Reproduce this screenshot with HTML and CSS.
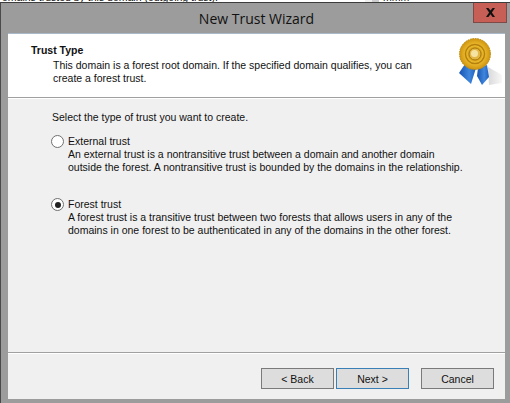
FILE: index.html
```html
<!DOCTYPE html>
<html lang="en">
<head>
    <meta charset="UTF-8">
    <title>New Trust Wizard</title>
    <link rel="stylesheet" href="styles.css">
</head>
<body>
    <div class="backdrop">
        <span class="backdrop-text">omains trusted by this domain (outgoing trust):</span>
        <span class="backdrop-scroll"></span>
        <span class="backdrop-col">mmm</span>
    </div>

    <div class="window">
        <div class="titlebar">
            <span class="title">New Trust Wizard</span>
            <button class="close">
                <svg width="11" height="9" viewBox="0 0 11 9"><path d="M1 0h2.4l2.1 2.6L7.6 0H10L6.9 4.4 10 9H7.6L5.5 6.2 3.4 9H1l3.1-4.6z" fill="#111"/></svg>
            </button>
        </div>

        <div class="client">
            <div class="header">
                <div class="header-text">
                    <h2>Trust Type</h2>
                    <p>This domain is a forest root domain. If the specified domain qualifies, you can<br>create a forest trust.</p>
                </div>
                <svg class="seal" width="46" height="50" viewBox="0 0 46 50">
                    <defs>
                        <radialGradient id="gold" cx="50%" cy="50%" r="50%">
                            <stop offset="0" stop-color="#f3d56c"/>
                            <stop offset="0.35" stop-color="#c9930f"/>
                            <stop offset="0.55" stop-color="#efc032"/>
                            <stop offset="1" stop-color="#cf9410"/>
                        </radialGradient>
                        <linearGradient id="blue" x1="0" y1="0" x2="1" y2="0">
                            <stop offset="0" stop-color="#1553b4"/>
                            <stop offset="0.6" stop-color="#3f86dc"/>
                            <stop offset="1" stop-color="#1d5fc0"/>
                        </linearGradient>
                        <linearGradient id="shade" x1="0" y1="0" x2="1" y2="0">
                            <stop offset="0" stop-color="#d9d9d9"/>
                            <stop offset="1" stop-color="#f8f8f8"/>
                        </linearGradient>
                    </defs>
                    <path d="M30 30l14 8v8l-13 2z" fill="url(#shade)"/>
                    <path d="M7 27l11 4-5 16L1 36z" fill="url(#blue)"/>
                    <path d="M20 31l9-3 2 12-7 8-5-9z" fill="url(#blue)"/>
                    <circle cx="17" cy="17" r="15.5" fill="url(#gold)" stroke="#b98a10" stroke-dasharray="1.5 1"/>
                    <circle cx="17" cy="17" r="9.5" fill="none" stroke="#b5800d" stroke-width="1.5"/>
                    <circle cx="17" cy="17" r="6" fill="#e3b746" stroke="#a9780d"/>
                    <circle cx="16.5" cy="16.5" r="3.5" fill="#f5e3a4"/>
                </svg>
            </div>

            <div class="body">
                <p class="prompt">Select the type of trust you want to create.</p>

                <div class="option">
                    <span class="radio"></span>
                    <div>
                        <div>External trust</div>
                        <div>An external trust is a nontransitive trust between a domain and another domain<br>outside the forest. A nontransitive trust is bounded by the domains in the relationship.</div>
                    </div>
                </div>

                <div class="option">
                    <span class="radio checked"></span>
                    <div>
                        <div>Forest trust</div>
                        <div>A forest trust is a transitive trust between two forests that allows users in any of the<br>domains in one forest to be authenticated in any of the domains in the other forest.</div>
                    </div>
                </div>
            </div>

            <div class="footer">
                <button class="btn">&lt; Back</button>
                <button class="btn default">Next &gt;</button>
                <button class="btn cancel">Cancel</button>
            </div>
        </div>
    </div>
</body>
</html>
```

FILE: styles.css
```css
/* Reset */
* {
    margin: 0;
    padding: 0;
    box-sizing: border-box;
}

body {
    width: 510px;
    height: 403px;
    overflow: hidden;
    background: #ffffff;
    font-family: "Liberation Sans", Arial, sans-serif;
    font-size: 10.5px;
    line-height: 13px;
    color: #111;
}

/* Sliver of the dialog behind */
.backdrop {
    display: flex;
    height: 2px;
    overflow: hidden;
    background: #fff;
}

.backdrop-text {
    width: 365px;
    flex: none;
    margin-top: -9px;
    padding-left: 2px;
    white-space: nowrap;
}

.backdrop-scroll {
    width: 14px;
    flex: none;
    background: linear-gradient(to right, #f0f0f0 50%, #cdcdcd 50%);
}

.backdrop-col {
    margin-top: -9px;
    margin-left: 4px;
}

/* Window frame */
.window {
    height: 401px;
    background: #9c9c9c;
    border-top: 1px solid #3c3c3c;
    border-left: 1px solid #4a4a4a;
    padding: 0 5px 4px 7px;
    display: flex;
    flex-direction: column;
}

.titlebar {
    height: 30px;
    flex: none;
    display: flex;
    justify-content: center;
    align-items: center;
    position: relative;
}

.title {
    font-family: "Open Sans", sans-serif;
    font-size: 14px;
    color: #111;
}

.close {
    position: absolute;
    top: 0;
    right: -2px;
    width: 34px;
    height: 20px;
    background: #c75f56;
    border: 1px solid #7d4a46;
    border-top: none;
    display: flex;
    justify-content: center;
    align-items: center;
}

.client {
    flex: 1;
    display: flex;
    flex-direction: column;
    background: #f0f0f0;
}

/* Header */
.header {
    height: 65px;
    flex: none;
    background: #fff;
    border-top: 1px solid #a9b9c9;
    border-bottom: 1px solid #a0a0a0;
    box-shadow: 0 1px 0 #fff;
    display: flex;
    justify-content: space-between;
    padding: 9px 1px 0 23px;
}

.header-text p {
    margin-left: 22px;
    margin-top: 2px;
}

h2 {
    font-size: 10.5px;
    line-height: 14px;
    font-weight: bold;
}

.seal {
    margin-top: -6px;
}

/* Options */
.body {
    flex: 1;
    padding: 13px 0 0 44px;
}

.prompt {
    margin-bottom: 11px;
}

.option {
    display: flex;
    margin-left: -1px;
    gap: 4px;
    height: 63px;
}

.radio {
    width: 13px;
    height: 13px;
    border-radius: 50%;
    flex: none;
    background: #fff;
    border: 1px solid #707070;
    display: flex;
    justify-content: center;
    align-items: center;
}

.radio.checked::after {
    content: "";
    width: 6px;
    height: 6px;
    border-radius: 50%;
    background: #222;
}

/* Buttons */
.footer {
    height: 47px;
    flex: none;
    border-top: 1px solid #a0a0a0;
    box-shadow: inset 0 1px 0 #fff;
    display: flex;
    padding: 15px 11px 0 253px;
    gap: 2px;
}

.btn {
    width: 73px;
    height: 21px;
    background: #dddddd;
    border: 1px solid #7a7a7a;
    font-family: inherit;
    font-size: 10.5px;
    color: #111;
}

.btn.default {
    border-color: #3a7fb5;
}

.btn.cancel {
    margin-left: 10px;
}
```
